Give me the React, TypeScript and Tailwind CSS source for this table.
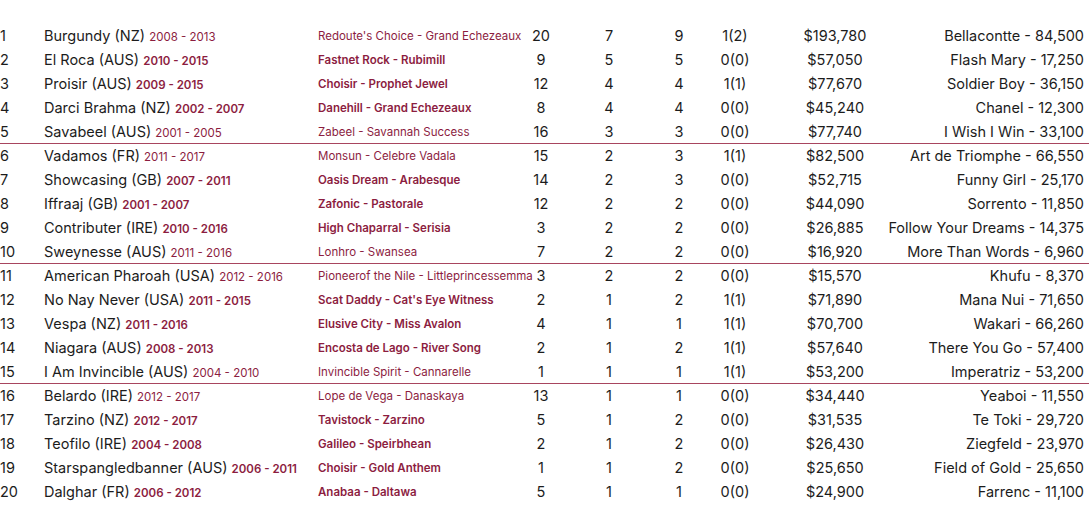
import React from "react";

type Row = {
  rank: number;
  name: string;
  years: string;
  pedigree: string;
  starters: string;
  winners: string;
  wins: string;
  stakes: string;
  earnings: string;
  best: string;
  light?: boolean;
};

const rows: Row[] = [
  { rank: 1, name: "Burgundy (NZ)", years: "2008 - 2013", pedigree: "Redoute's Choice - Grand Echezeaux", starters: "20", winners: "7", wins: "9", stakes: "1(2)", earnings: "$193,780", best: "Bellacontte - 84,500", light: true },
  { rank: 2, name: "El Roca (AUS)", years: "2010 - 2015", pedigree: "Fastnet Rock - Rubimill", starters: "9", winners: "5", wins: "5", stakes: "0(0)", earnings: "$57,050", best: "Flash Mary - 17,250" },
  { rank: 3, name: "Proisir (AUS)", years: "2009 - 2015", pedigree: "Choisir - Prophet Jewel", starters: "12", winners: "4", wins: "4", stakes: "1(1)", earnings: "$77,670", best: "Soldier Boy - 36,150" },
  { rank: 4, name: "Darci Brahma (NZ)", years: "2002 - 2007", pedigree: "Danehill - Grand Echezeaux", starters: "8", winners: "4", wins: "4", stakes: "0(0)", earnings: "$45,240", best: "Chanel - 12,300" },
  { rank: 5, name: "Savabeel (AUS)", years: "2001 - 2005", pedigree: "Zabeel - Savannah Success", starters: "16", winners: "3", wins: "3", stakes: "0(0)", earnings: "$77,740", best: "I Wish I Win - 33,100", light: true },
  { rank: 6, name: "Vadamos (FR)", years: "2011 - 2017", pedigree: "Monsun - Celebre Vadala", starters: "15", winners: "2", wins: "3", stakes: "1(1)", earnings: "$82,500", best: "Art de Triomphe - 66,550", light: true },
  { rank: 7, name: "Showcasing (GB)", years: "2007 - 2011", pedigree: "Oasis Dream - Arabesque", starters: "14", winners: "2", wins: "3", stakes: "0(0)", earnings: "$52,715", best: "Funny Girl - 25,170" },
  { rank: 8, name: "Iffraaj (GB)", years: "2001 - 2007", pedigree: "Zafonic - Pastorale", starters: "12", winners: "2", wins: "2", stakes: "0(0)", earnings: "$44,090", best: "Sorrento - 11,850" },
  { rank: 9, name: "Contributer (IRE)", years: "2010 - 2016", pedigree: "High Chaparral - Serisia", starters: "3", winners: "2", wins: "2", stakes: "0(0)", earnings: "$26,885", best: "Follow Your Dreams - 14,375" },
  { rank: 10, name: "Sweynesse (AUS)", years: "2011 - 2016", pedigree: "Lonhro - Swansea", starters: "7", winners: "2", wins: "2", stakes: "0(0)", earnings: "$16,920", best: "More Than Words - 6,960", light: true },
  { rank: 11, name: "American Pharoah (USA)", years: "2012 - 2016", pedigree: "Pioneerof the Nile - Littleprincessemma", starters: "3", winners: "2", wins: "2", stakes: "0(0)", earnings: "$15,570", best: "Khufu - 8,370", light: true },
  { rank: 12, name: "No Nay Never (USA)", years: "2011 - 2015", pedigree: "Scat Daddy - Cat's Eye Witness", starters: "2", winners: "1", wins: "2", stakes: "1(1)", earnings: "$71,890", best: "Mana Nui - 71,650" },
  { rank: 13, name: "Vespa (NZ)", years: "2011 - 2016", pedigree: "Elusive City - Miss Avalon", starters: "4", winners: "1", wins: "1", stakes: "1(1)", earnings: "$70,700", best: "Wakari - 66,260" },
  { rank: 14, name: "Niagara (AUS)", years: "2008 - 2013", pedigree: "Encosta de Lago - River Song", starters: "2", winners: "1", wins: "2", stakes: "1(1)", earnings: "$57,640", best: "There You Go - 57,400" },
  { rank: 15, name: "I Am Invincible (AUS)", years: "2004 - 2010", pedigree: "Invincible Spirit - Cannarelle", starters: "1", winners: "1", wins: "1", stakes: "1(1)", earnings: "$53,200", best: "Imperatriz - 53,200", light: true },
  { rank: 16, name: "Belardo (IRE)", years: "2012 - 2017", pedigree: "Lope de Vega - Danaskaya", starters: "13", winners: "1", wins: "1", stakes: "0(0)", earnings: "$34,440", best: "Yeaboi - 11,550", light: true },
  { rank: 17, name: "Tarzino (NZ)", years: "2012 - 2017", pedigree: "Tavistock - Zarzino", starters: "5", winners: "1", wins: "2", stakes: "0(0)", earnings: "$31,535", best: "Te Toki - 29,720" },
  { rank: 18, name: "Teofilo (IRE)", years: "2004 - 2008", pedigree: "Galileo - Speirbhean", starters: "2", winners: "1", wins: "2", stakes: "0(0)", earnings: "$26,430", best: "Ziegfeld - 23,970" },
  { rank: 19, name: "Starspangledbanner (AUS)", years: "2006 - 2011", pedigree: "Choisir - Gold Anthem", starters: "1", winners: "1", wins: "2", stakes: "0(0)", earnings: "$25,650", best: "Field of Gold - 25,650" },
  { rank: 20, name: "Dalghar (FR)", years: "2006 - 2012", pedigree: "Anabaa - Daltawa", starters: "5", winners: "1", wins: "1", stakes: "0(0)", earnings: "$24,900", best: "Farrenc - 11,100" },
];

const SireRow = ({ row }: { row: Row }) => {
  const divider = row.rank % 5 === 0 && row.rank < 20;
  const red = row.light ? "font-normal" : "font-semibold";

  return (
    <div
      className={`grid grid-cols-[44px_274px_198px_50px_86px_54px_58px_142px_178px] items-center h-[24px] text-[14.5px] text-[#1c1c1c] whitespace-nowrap ${
        divider ? "border-b border-[#a8455f]" : ""
      }`}
    >
      <div>{row.rank}</div>
      <div>
        {row.name} <span className={`text-[11.5px] text-[#8c1d3f] ${red}`}>{row.years}</span>
      </div>
      <div className={`pt-[2px] text-[11.5px] text-[#8c1d3f] ${red}`}>{row.pedigree}</div>
      <div className="text-center">{row.starters}</div>
      <div className="text-center">{row.winners}</div>
      <div className="text-center">{row.wins}</div>
      <div className="text-center">{row.stakes}</div>
      <div className="text-center">{row.earnings}</div>
      <div className="flex justify-end">{row.best}</div>
    </div>
  );
};

export default function App() {
  return (
    <div className="w-[1089px] h-[518px] bg-white pt-[24px] font-['Inter',sans-serif]">
      {rows.map((row) => (
        <SireRow key={row.rank} row={row} />
      ))}
    </div>
  );
}
